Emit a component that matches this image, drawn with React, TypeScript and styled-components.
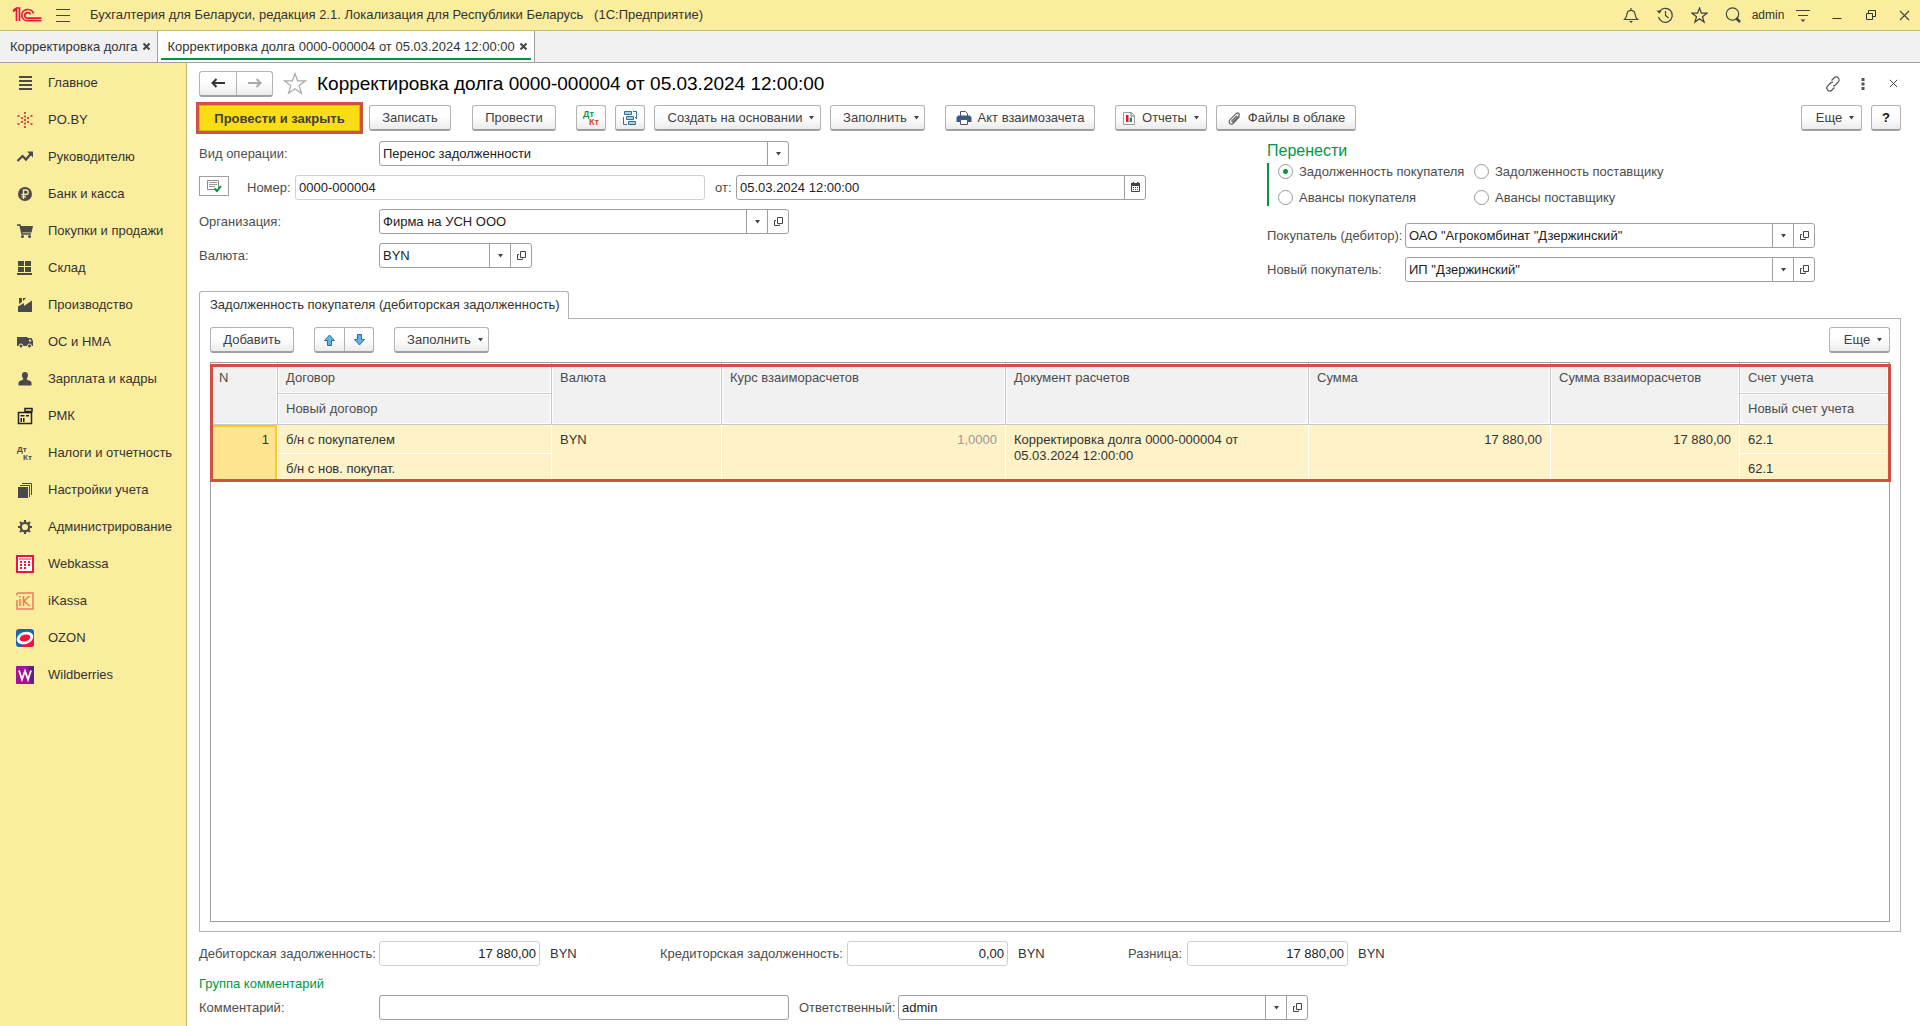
import React from "react";
import styled, { createGlobalStyle, css } from "styled-components";

const GREEN = "#009646";
const LINE = "#a0a0a0";
const YELLOW = "#fbed9e";
const RED = "#d35042";
const DARK = "#4a4a4a";

const Global = createGlobalStyle`
  * { box-sizing: border-box; }
  html, body { margin: 0; background: #fff; }
  body, button, input, select, table {
    font-family: "Liberation Sans", Arial, sans-serif;
    font-size: 13px;
    line-height: 16px;
    color: #333;
  }
  svg { display: block; flex: none; }
`;

/* ---------- frame ---------- */

const Page = styled.div`
  min-height: 100vh;
  display: flex;
  flex-direction: column;
`;

const TitleBar = styled.header`
  height: 31px;
  display: flex;
  align-items: center;
  justify-content: space-between;
  background: ${YELLOW};
  border-bottom: 1px solid #c9ba72;
  padding-left: 12px;
`;

const TitleGroup = styled.div`
  display: flex;
  align-items: center;
`;

const IconButton = styled.button<{ $w?: number }>`
  width: ${(p) => p.$w ?? 34}px;
  height: 24px;
  padding: 0;
  border: 0;
  background: none;
  display: flex;
  align-items: center;
  justify-content: center;
`;

const AppName = styled.span`
  margin-left: 6px;
  white-space: pre;
`;

const UserLink = styled.a`
  width: 36px;
  text-align: center;
  font-size: 12px;
  color: #333;
  text-decoration: none;
`;

const TabBar = styled.nav`
  height: 32px;
  display: flex;
  background: #f1f1f1;
  border-bottom: 1px solid ${LINE};
`;

const WindowTab = styled.div<{ $active?: boolean }>`
  display: flex;
  align-items: center;
  position: relative;
  padding: 0 1px 0 10px;
  border-right: 1px solid ${LINE};
  background: ${(p) => (p.$active ? "#fff" : "transparent")};
  ${(p) =>
    p.$active &&
    css`
      &::after {
        content: "";
        position: absolute;
        left: 3px;
        right: 3px;
        bottom: 2px;
        height: 2px;
        background: ${GREEN};
      }
    `}
`;

const TabLink = styled.a`
  color: #333;
  text-decoration: none;
  white-space: nowrap;
`;

const Body = styled.div`
  flex: 1;
  display: flex;
`;

const Sidebar = styled.nav`
  flex: none;
  width: 187px;
  background: ${YELLOW};
  border-right: 1px solid #c9ba72;
  padding-top: 1px;
`;

const SideLink = styled.a`
  height: 37px;
  display: flex;
  align-items: center;
  gap: 14px;
  padding-left: 16px;
  color: #333;
  text-decoration: none;
  white-space: nowrap;
`;

const Main = styled.main`
  flex: 1;
  min-width: 0;
  display: flex;
  flex-direction: column;
  padding: 8px 19px 6px 12px;
`;

/* ---------- buttons ---------- */

const buttonFace = css`
  border: 1px solid #b3b3b3;
  border-bottom: 2px solid ${LINE};
  border-radius: 3px;
  background: linear-gradient(#fff 45%, #ececec);
`;

const Button = styled.button<{ $w: number; $primary?: boolean }>`
  flex: none;
  width: ${(p) => p.$w}px;
  height: 26px;
  padding: 1px 0 0;
  display: flex;
  align-items: center;
  justify-content: center;
  gap: 6px;
  white-space: nowrap;
  color: #404040;
  ${buttonFace}
  ${(p) =>
    p.$primary &&
    css`
      border: 1px solid #d9b900;
      border-radius: 0;
      background: #fbdd13;
      font-weight: bold;
      outline: 3px solid ${RED};
      outline-offset: 0;
    `}
`;

const HelpButton = styled(Button)`
  font-weight: bold;
  color: #111;
`;

const ButtonPair = styled.div`
  display: flex;
  height: 26px;
  ${buttonFace}
  button + button {
    border-left: 1px solid #b3b3b3;
  }
`;

const HalfButton = styled.button<{ $w: number }>`
  width: ${(p) => p.$w}px;
  padding: 0;
  border: 0;
  background: none;
  display: flex;
  align-items: center;
  justify-content: center;
`;

const MenuText = styled.span`
  padding-left: 8px;
`;

const Row = styled.div<{ $gap?: number }>`
  display: flex;
  align-items: center;
  gap: ${(p) => p.$gap ?? 0}px;
`;

const HeadRow = styled(Row)`
  height: 25px;
`;

const Heading = styled.h1`
  margin: 0;
  font-size: 19px;
  line-height: 24px;
  font-weight: normal;
  color: #000;
  flex: 1;
`;

const CommandBar = styled.div`
  display: flex;
  margin-top: 9px;
  gap: 9px;
`;

const CommandGroup = styled.div<{ $after?: number }>`
  display: flex;
  gap: 9px;
  margin-right: ${(p) => p.$after ?? 11}px;
`;

const Spacer = styled.div`
  flex: 1;
`;

/* ---------- form ---------- */

const FormGrid = styled.div`
  display: grid;
  grid-template-columns: minmax(0, 1fr) 634px;
  margin-top: 10px;
`;

const Stack = styled.div`
  display: flex;
  flex-direction: column;
  gap: 9px;
`;

const Label = styled.label<{ $w: number }>`
  flex: none;
  width: ${(p) => p.$w}px;
  color: #4d4d4d;
  white-space: nowrap;
`;

const NextLabel = styled(Label)`
  padding-left: 10px;
`;

const FieldBox = styled.div<{ $w: number; $quiet?: boolean }>`
  flex: 0 1 ${(p) => p.$w}px;
  min-width: 0;
  height: 25px;
  display: flex;
  position: relative;
  border: 1px solid ${(p) => (p.$quiet ? "#d0d0d0" : LINE)};
  border-radius: 3px;
  background: #fff;
`;

const inputFace = css`
  flex: 1;
  min-width: 0;
  width: 100%;
  padding: 0 3px;
  border: 0;
  outline: 0;
  background: none;
  color: #222;
`;

const Input = styled.input<{ $right?: boolean }>`
  ${inputFace}
  text-align: ${(p) => (p.$right ? "right" : "left")};
`;

const Select = styled.select`
  ${inputFace}
  appearance: none;
`;

const SelectArrow = styled.span`
  position: absolute;
  top: 0;
  right: 0;
  bottom: 0;
  width: 21px;
  border-left: 1px solid ${LINE};
  display: flex;
  align-items: center;
  justify-content: center;
  pointer-events: none;
`;

const FieldButton = styled.button`
  flex: none;
  width: 21px;
  padding: 0;
  border: 0;
  border-left: 1px solid ${LINE};
  background: none;
  display: flex;
  align-items: center;
  justify-content: center;
`;

const StatusButton = styled.button`
  width: 30px;
  height: 20px;
  margin: 0 18px 4px 0;
  padding: 0;
  border: 1px solid ${LINE};
  background: #fff;
  display: flex;
  align-items: center;
  justify-content: center;
`;

const RadioGroup = styled.fieldset`
  margin: 0 0 8px;
  padding: 0;
  border: 0;
  min-width: 0;
`;

const RadioTitle = styled.legend`
  padding: 0;
  font-size: 16px;
  line-height: 20px;
  height: 22px;
  color: ${GREEN};
`;

const RadioGrid = styled.div`
  display: grid;
  grid-template-columns: 196px 196px;
  grid-auto-rows: 17px;
  row-gap: 9px;
  padding-left: 9px;
  border-left: 2px solid ${GREEN};
`;

const RadioLabel = styled.label`
  display: flex;
  align-items: center;
  gap: 6px;
  color: #4d4d4d;
  white-space: nowrap;
`;

const Radio = styled.input`
  appearance: none;
  flex: none;
  width: 15px;
  height: 15px;
  margin: 0;
  border: 1px solid #999;
  border-radius: 50%;
  &:checked {
    background: radial-gradient(circle, ${GREEN} 0 2px, #fff 3px);
  }
`;

/* ---------- tab panel ---------- */

const PageTab = styled.div`
  align-self: flex-start;
  height: 28px;
  margin: 9px 0 -1px;
  padding: 5px 8px 0 10px;
  border: 1px solid #b3b3b3;
  border-bottom: 0;
  border-radius: 3px 3px 0 0;
  background: #fff;
  position: relative;
  white-space: nowrap;
`;

const Panel = styled.section`
  flex: 1;
  display: flex;
  flex-direction: column;
  gap: 9px;
  padding: 8px 10px 9px;
  border: 1px solid #b3b3b3;
`;

const TableArea = styled.div`
  flex: 1;
  border: 1px solid ${LINE};
`;

const Marked = styled.div`
  position: relative;
  &::after {
    content: "";
    position: absolute;
    inset: 1px -2px -1px -1px;
    border: 3px solid ${RED};
    pointer-events: none;
  }
`;

const Table = styled.table`
  width: 100%;
  table-layout: fixed;
  border-collapse: separate;
  border-spacing: 0;
`;

const Th = styled.th`
  height: 31px;
  padding: 7px 7px 0 8px;
  background: #f1f1f1;
  border-right: 1px solid #c8c8c8;
  border-bottom: 1px solid #c8c8c8;
  box-shadow: inset -1px -1px 0 #fff, inset 1px 1px 0 #fff;
  font-weight: normal;
  text-align: left;
  vertical-align: top;
  color: #4d4d4d;
  white-space: nowrap;
`;

const Td = styled.td<{ $right?: boolean; $muted?: boolean; $focus?: boolean; $low?: boolean }>`
  height: ${(p) => (p.$low ? 27 : 29)}px;
  padding: 7px 8px 0;
  background: ${(p) => (p.$focus ? "#ffe58f" : "#fef2c8")};
  border-right: 1px solid #fff;
  border-bottom: 1px solid #fff;
  text-align: ${(p) => (p.$right ? "right" : "left")};
  vertical-align: top;
  color: ${(p) => (p.$muted ? "#999" : "#333")};
  ${(p) =>
    p.$focus &&
    css`
      box-shadow: inset -2px 2px 0 #fcca26;
    `}
`;

/* ---------- footer ---------- */

const Footer = styled.footer`
  margin-top: 9px;
`;

const Unit = styled.span`
  width: 120px;
  padding-left: 10px;
`;

const GroupTitle = styled.div`
  margin: 10px 0 3px;
  color: ${GREEN};
`;

/* ---------- icons ---------- */

const Svg = ({ w, h = w, children }: { w: number; h?: number; children: React.ReactNode }) => (
  <svg width={w} height={h} viewBox={`0 0 ${w} ${h}`} fill="none" aria-hidden="true">
    {children}
  </svg>
);

const Caret = () => (
  <Svg w={7} h={4}>
    <path d="M1 0h5L3.5 3.5z" fill="#444" />
  </Svg>
);

const OpenIcon = () => (
  <Svg w={11} h={11}>
    <path d="M4.5 1.5h5v6h-5zM3 4.5H1.5v5h5V8.5" stroke="#444" />
  </Svg>
);

const CrossIcon = () => (
  <Svg w={9}>
    <path d="M1.5 1.5l6 6M7.5 1.5l-6 6" stroke="#444" strokeWidth="2" />
  </Svg>
);

const Logo = () => (
  <Svg w={30} h={18}>
    <g stroke="#e3193c" strokeWidth="1.7">
      <path d="M1 5.5L4.5 3V15M7.5 15V2H4.5L1.5 4.2" />
      <path d="M21.5 7.5a6 5.6 0 1 0-5.5 7.2H29.5" />
      <path d="M18.5 8.5a3 2.7 0 1 0-2.5 3.6H29.5" />
    </g>
  </Svg>
);

const MenuIcon = () => (
  <Svg w={16}>
    <path d="M1 2.5h14M1 8.5h14M1 14.5h14" stroke="#444" />
  </Svg>
);

const BellIcon = () => (
  <Svg w={16}>
    <path
      d="M1.5 12.5h13c-2-1.8-2-3-2.6-6C11.4 4.2 10 3.3 8 3.3S4.6 4.2 4.1 6.5c-.6 3-.6 4.2-2.6 6zM8 1v2"
      stroke="#444"
      strokeWidth="1.2"
    />
    <path d="M6 14h4l-2 2z" fill="#444" />
  </Svg>
);

const HistoryIcon = () => (
  <Svg w={18}>
    <path d="M3.4 5.5A7 7 0 1 1 2.5 11M9.5 5v4.5l3 2.5" stroke="#444" strokeWidth="1.2" />
    <path d="M.5 4.5l5 .2-2 3z" fill="#444" />
  </Svg>
);

const StarIcon = ({ size, color }: { size: number; color: string }) => (
  <svg
    width={size}
    height={size}
    viewBox="0 0 24 24"
    fill="none"
    stroke={color}
    strokeWidth={size > 20 ? 1.2 : 1.8}
    aria-hidden="true"
  >
    <path d="M12 1.5l2.6 7.3h7.9l-6.3 4.8 2.3 7.7-6.5-4.6-6.5 4.6 2.3-7.7L1.5 8.8h7.9z" />
  </svg>
);

const SearchIcon = () => (
  <Svg w={16}>
    <circle cx="7.5" cy="7" r="6.2" stroke="#444" strokeWidth="1.2" />
    <path d="M11 11l4 4" stroke="#444" strokeWidth="2.5" />
  </Svg>
);

const OptionsIcon = () => (
  <Svg w={16}>
    <path d="M1 3.5h14M3 8.5h10" stroke="#444" strokeWidth="1.2" />
    <path d="M5.5 12.5h5L8 15z" fill="#444" />
  </Svg>
);

const MinimizeIcon = () => (
  <Svg w={10}>
    <path d="M.5 8.5h9" stroke="#333" />
  </Svg>
);

const RestoreIcon = () => (
  <Svg w={10}>
    <path d="M.5 3.5h6v6h-6zM2.5 3V.5h7v6H7" stroke="#333" />
  </Svg>
);

const CloseIcon = ({ size = 11 }: { size?: number }) => (
  <svg width={size} height={size} viewBox="0 0 11 11" fill="none" aria-hidden="true">
    <path d="M1 1l9 9M10 1l-9 9" stroke="#444" strokeWidth="1.2" />
  </svg>
);

const LinkIcon = () => (
  <Svg w={16}>
    <g stroke="#555" strokeWidth="1.2">
      <path d="M6.5 4.5L9 2c1.3-1.3 3-1.3 4.2-.2 1.2 1.2 1.3 3 0 4.3L10.5 9c-.8.7-1.6 1-2.5.8" />
      <path d="M9.5 11.5L7 14c-1.3 1.3-3 1.3-4.2.2-1.2-1.2-1.3-3 0-4.3L5.5 7c.8-.7 1.6-1 2.5-.8" />
    </g>
  </Svg>
);

const DotsIcon = () => (
  <Svg w={4} h={12}>
    <path d="M.5 0h3v3h-3zM.5 4.5h3v3h-3zM.5 9h3v3h-3z" fill="#555" />
  </Svg>
);

const ArrowIcon = ({ color, flip }: { color: string; flip?: boolean }) => (
  <Svg w={14} h={10}>
    <path d={flip ? "M0 5h12M8.5 1l4 4-4 4" : "M14 5H2M5.5 1l-4 4 4 4"} stroke={color} strokeWidth="2" />
  </Svg>
);

const MoveIcon = ({ down }: { down?: boolean }) => (
  <Svg w={11} h={12}>
    <path
      d={down ? "M3.5.5h4v5h3l-5 5.5-5-5.5h3z" : "M3.5 11.5h4v-5h3L5.5 1l-5 5.5h3z"}
      fill="#5cb3e6"
      stroke="#2c6f9e"
    />
  </Svg>
);

const PostingsIcon = ({ a, b, size = 8 }: { a: string; b: string; size?: number }) => (
  <svg
    width="18"
    height="18"
    viewBox="0 0 18 18"
    fontFamily="Liberation Sans, Arial, sans-serif"
    fontWeight="bold"
    fontSize={size}
    aria-hidden="true"
  >
    <text x="1" y="8" fill={a}>Дт</text>
    <text x="7" y="16" fill={b}>Кт</text>
  </svg>
);

const StructureIcon = () => (
  <Svg w={16}>
    <g stroke="#356f96">
      <path d="M2.5 1.5h7v3h-7zM4.5 6.5h7v3h-7zM6.5 11.5h7v3h-7z" fill="#a9cde4" />
      <path d="M11 1.5h3.5V9M1.5 7v7.5H5M13 7.5h1.5" />
    </g>
  </Svg>
);

const PrintIcon = () => (
  <Svg w={16}>
    <path d="M4.5 6V1.5h5l2 2V6" fill="#fff" stroke="#557" />
    <path d="M2 5.5h12l1.5 2V12H.5V7.5z" fill="#3b5a8c" />
    <path d="M4.5 9.5h7v5h-7z" fill="#fff" stroke="#557" />
  </Svg>
);

const ReportIcon = () => (
  <Svg w={14} h={15}>
    <path d="M1.5 1.5h8l3 3v9h-11z" fill="#fff" stroke="#999" />
    <path d="M9 1.5V5h3.5" stroke="#666" />
    <path d="M4 4h2.5v7H4z" fill="#e3173e" />
    <path d="M7.5 6.5H10V11H7.5z" fill="#129a4b" />
  </Svg>
);

const ClipIcon = () => (
  <Svg w={15} h={15}>
    <path
      d="M12.5 5.5l-6 6.5c-1.2 1.2-2.8 1.3-3.7.4-1-1-.8-2.5.3-3.7l6-6c.8-.8 2-.9 2.7-.2.7.7.7 1.8-.1 2.6L6.3 10.6c-.4.4-.9.4-1.2.1-.3-.3-.3-.8.1-1.2L10 4.8"
      stroke="#666"
      strokeWidth="1.2"
    />
  </Svg>
);

const StatusIcon = () => (
  <Svg w={16} h={14}>
    <path d="M1.5 1.5h11v9h-11z" fill="#fff" stroke="#888" />
    <path d="M3 3.5h8M3 5.5h8M3 7.5h6" stroke="#999" />
    <path d="M8.5 9.5L11 12l4-5" stroke={GREEN} strokeWidth="2" />
  </Svg>
);

const CalendarIcon = () => (
  <Svg w={11}>
    <path d="M1.5 1.5h8v8h-8z" stroke="#444" />
    <path d="M1 1h9v3H1zM2.5 0H4v1H2.5zM7 0h1.5v1H7z" fill="#444" />
    <path d="M3 5.5h6M3 7.5h6" stroke="#444" strokeDasharray="1 1" />
  </Svg>
);

const side: Record<string, React.ReactNode> = {
  main: <path d="M3 3h13M3 7h13M3 11h13M3 15h13" stroke={DARK} strokeWidth="2" />,
  poby: (
    <path
      d="M8 1h2v2H8zM8 4.5h2v2H8zM8 8h2v2H8zM8 11.5h2v2H8zM8 15h2v2H8zM5 6h2v2H5zM11 6h2v2h-2zM5 10h2v2H5zM11 10h2v2h-2zM1.5 4h2v2h-2zM14.5 4h2v2h-2zM1.5 12h2v2h-2zM14.5 12h2v2h-2z"
      fill="#d2503a"
    />
  ),
  chief: (
    <>
      <path d="M1.5 13l5-5 3.5 3.5 5-6" stroke={DARK} strokeWidth="2.2" />
      <path d="M11 3.5h6v6z" fill={DARK} />
    </>
  ),
  bank: (
    <>
      <circle cx="9" cy="9" r="7" fill={DARK} />
      <path d="M7.5 14V5H10c3 0 3 4.5 0 4.5H5.5M5.5 11.8H10" stroke={YELLOW} strokeWidth="1.3" />
    </>
  ),
  cart: (
    <>
      <path d="M1 3h3l2 9h9" stroke={DARK} strokeWidth="1.4" />
      <path d="M4 4h13l-1.5 6.5h-10z" fill={DARK} />
      <circle cx="6.5" cy="14.5" r="1.5" fill={DARK} />
      <circle cx="13.5" cy="14.5" r="1.5" fill={DARK} />
    </>
  ),
  store: <path d="M2 2h6v5H2zM9 2h6v5H9zM2 8h6v5H2zM9 8h6v5H9zM1 14h15v2H1z" fill={DARK} />,
  plant: <path d="M2 16v-5.5L8 7v3l8-5.5V16zM3 2h3v4L3 8zM7 2h3L7 5z" fill={DARK} />,
  truck: (
    <>
      <path d="M1 4h10.500v9H1zM11 5h4.5L17 8v5h-6z" fill={DARK} />
      <path d="M13 6.500h1.500l1 2H13z" fill={YELLOW} />
      <circle cx="5" cy="13" r="2" fill={DARK} stroke={YELLOW} />
      <circle cx="13.5" cy="13" r="2" fill={DARK} stroke={YELLOW} />
    </>
  ),
  person: (
    <path d="M9 2c4 0 3.5 5 1.500 7 0 1 4.500 1.500 5 3.500v3h-13v-3c.5-2 5-2.500 5-3.500C5.500 7 5 2 9 2z" fill={DARK} />
  ),
  till: (
    <>
      <path d="M2.5 5.5h13v11h-13zM9 1.5h7v3H9zM12 4.500v2" stroke="#222" strokeWidth="1.5" />
      <path d="M4.5 8h4v1.5h-4zM4.5 11H6v4H4.5zM7 11h1.5v4H7zM10 8h3v1.5h-3z" fill="#222" />
    </>
  ),
  books: (
    <>
      <path d="M2 6h10v11H2z" fill={DARK} />
      <path d="M4 4.5h9.5V16M6 2.5h9.5V14" stroke={DARK} />
    </>
  ),
  gear: (
    <>
      <circle cx="9" cy="9" r="4.2" stroke={DARK} strokeWidth="2.2" />
      <path
        d="M9 2v2.5M9 13.5V16M2 9h2.5M13.5 9H16M4 4l2 2M12 12l2 2M14 4l-2 2M6 12l-2 2"
        stroke={DARK}
        strokeWidth="2.2"
      />
    </>
  ),
  webkassa: (
    <>
      <path d="M1 1h16v16H1z" fill="#fff" stroke="#f5113f" strokeWidth="2" />
      <path d="M3 4h12" stroke="#f5113f" />
      <path
        d="M4 6h2v2H4zM8 6h2v2H8zM12 6h2v2h-2zM4 9h2v2H4zM8 9h2v2H8zM12 9h2v2h-2zM4 12h2v2H4zM8 12h2v2H8z"
        fill="#f5113f"
      />
    </>
  ),
  ikassa: (
    <path
      d="M4 1h13v16H1V8M1 1v2.5M1 1h4M4 7v7M4 4v1.5M7.5 4v10M13.5 4L8 9l5.5 5"
      stroke="#ec7a5e"
      strokeWidth="1.5"
    />
  ),
  ozon: (
    <>
      <rect width="18" height="18" rx="3" fill="#1666c0" />
      <path d="M18 9v6a3 3 0 0 1-3 3H4z" fill="#f5113f" />
      <ellipse cx="9" cy="9" rx="8.5" ry="6" transform="rotate(-20 9 9)" fill="#fff" />
      <ellipse cx="9" cy="9" rx="5.5" ry="3.3" transform="rotate(-15 9 9)" fill="#f5113f" />
    </>
  ),
  wb: (
    <>
      <rect width="18" height="18" rx="1" fill="#a3129b" />
      <path d="M12 0h6v18h-3z" fill="#5a2380" />
      <path d="M3 4.5l3 9L9 5l3 8.5 3-9" stroke="#fff" strokeWidth="1.8" />
    </>
  ),
};

const menu: [string, string][] = [
  ["main", "Главное"],
  ["poby", "PO.BY"],
  ["chief", "Руководителю"],
  ["bank", "Банк и касса"],
  ["cart", "Покупки и продажи"],
  ["store", "Склад"],
  ["plant", "Производство"],
  ["truck", "ОС и НМА"],
  ["person", "Зарплата и кадры"],
  ["till", "РМК"],
  ["dtkt", "Налоги и отчетность"],
  ["books", "Настройки учета"],
  ["gear", "Администрирование"],
  ["webkassa", "Webkassa"],
  ["ikassa", "iKassa"],
  ["ozon", "OZON"],
  ["wb", "Wildberries"],
];

/* ---------- composed parts ---------- */

const MenuButton = ({ w, icon, children }: { w: number; icon?: React.ReactNode; children: string }) => (
  <Button $w={w}>
    {icon}
    {icon ? children : <MenuText>{children}</MenuText>}
    <Caret />
  </Button>
);

const Combo = ({ id, value, w = 410 }: { id: string; value: string; w?: number }) => (
  <FieldBox $w={w}>
    <Input id={id} defaultValue={value} />
    <FieldButton type="button" aria-label="Выбрать"><Caret /></FieldButton>
    <FieldButton type="button" aria-label="Открыть"><OpenIcon /></FieldButton>
  </FieldBox>
);

const Total = ({ id, label, labelWidth, value }: { id: string; label: string; labelWidth: number; value: string }) => (
  <>
    <Label htmlFor={id} $w={labelWidth}>{label}</Label>
    <FieldBox $w={161} $quiet>
      <Input id={id} defaultValue={value} readOnly $right />
    </FieldBox>
    <Unit>BYN</Unit>
  </>
);

const RadioItem = ({ label, checked }: { label: string; checked?: boolean }) => (
  <RadioLabel>
    <Radio type="radio" name="transfer" defaultChecked={checked} />
    {label}
  </RadioLabel>
);

const columns = [67, 274, 170, 284, 303, 242, 189];

export default function App() {
  return (
    <>
      <Global />
      <Page>
        <TitleBar>
          <TitleGroup>
            <Logo />
            <IconButton aria-label="Меню" $w={42}><MenuIcon /></IconButton>
            <AppName>{"Бухгалтерия для Беларуси, редакция 2.1. Локализация для Республики Беларусь   (1С:Предприятие)"}</AppName>
          </TitleGroup>
          <TitleGroup>
            <IconButton aria-label="Уведомления"><BellIcon /></IconButton>
            <IconButton aria-label="История"><HistoryIcon /></IconButton>
            <IconButton aria-label="Избранное"><StarIcon size={17} color="#444" /></IconButton>
            <IconButton aria-label="Поиск"><SearchIcon /></IconButton>
            <UserLink href="#user">admin</UserLink>
            <IconButton aria-label="Настройки"><OptionsIcon /></IconButton>
            <IconButton aria-label="Свернуть"><MinimizeIcon /></IconButton>
            <IconButton aria-label="Восстановить"><RestoreIcon /></IconButton>
            <IconButton aria-label="Закрыть" $w={32}><CloseIcon /></IconButton>
          </TitleGroup>
        </TitleBar>

        <TabBar>
          <WindowTab>
            <TabLink href="#list">Корректировка долга</TabLink>
            <IconButton aria-label="Закрыть вкладку" $w={18}><CrossIcon /></IconButton>
          </WindowTab>
          <WindowTab $active>
            <TabLink href="#doc">Корректировка долга 0000-000004 от 05.03.2024 12:00:00</TabLink>
            <IconButton aria-label="Закрыть вкладку" $w={18}><CrossIcon /></IconButton>
          </WindowTab>
        </TabBar>

        <Body>
          <Sidebar>
            {menu.map(([icon, text]) => (
              <SideLink key={icon} href={`#${icon}`}>
                {icon === "dtkt" ? <PostingsIcon a={DARK} b={DARK} /> : <Svg w={18}>{side[icon]}</Svg>}
                {text}
              </SideLink>
            ))}
          </Sidebar>

          <Main>
            <HeadRow>
              <ButtonPair>
                <HalfButton aria-label="Назад" $w={36}><ArrowIcon color="#333" /></HalfButton>
                <HalfButton aria-label="Вперед" $w={36}><ArrowIcon color="#aaa" flip /></HalfButton>
              </ButtonPair>
              <IconButton aria-label="В избранное" $w={44}><StarIcon size={24} color="#aaa" /></IconButton>
              <Heading>Корректировка долга 0000-000004 от 05.03.2024 12:00:00</Heading>
              <Row $gap={14}>
                <IconButton aria-label="Ссылка" $w={16}><LinkIcon /></IconButton>
                <IconButton aria-label="Дополнительно" $w={16}><DotsIcon /></IconButton>
                <IconButton aria-label="Закрыть" $w={16}><CloseIcon size={9} /></IconButton>
              </Row>
            </HeadRow>

            <CommandBar>
              <CommandGroup $after={12}>
                <Button $w={161} $primary>Провести и закрыть</Button>
                <Button $w={82}>Записать</Button>
              </CommandGroup>
              <CommandGroup>
                <Button $w={84}>Провести</Button>
              </CommandGroup>
              <CommandGroup>
                <Button $w={30} aria-label="Проводки"><PostingsIcon a="#0a9246" b="#d8402e" size={9} /></Button>
                <Button $w={30} aria-label="Структура"><StructureIcon /></Button>
                <MenuButton w={167}>Создать на основании</MenuButton>
                <MenuButton w={95}>Заполнить</MenuButton>
              </CommandGroup>
              <CommandGroup>
                <Button $w={150}><PrintIcon />Акт взаимозачета</Button>
              </CommandGroup>
              <CommandGroup>
                <MenuButton w={92} icon={<ReportIcon />}>Отчеты</MenuButton>
                <Button $w={140}><ClipIcon />Файлы в облаке</Button>
              </CommandGroup>
              <Spacer />
              <MenuButton w={61}>Еще</MenuButton>
              <HelpButton $w={30}>?</HelpButton>
            </CommandBar>

            <FormGrid>
              <Stack>
                <Row>
                  <Label htmlFor="kind" $w={180}>Вид операции:</Label>
                  <FieldBox $w={410}>
                    <Select id="kind"><option>Перенос задолженности</option></Select>
                    <SelectArrow><Caret /></SelectArrow>
                  </FieldBox>
                </Row>
                <Row>
                  <StatusButton aria-label="Статус документа"><StatusIcon /></StatusButton>
                  <Label htmlFor="number" $w={48}>Номер:</Label>
                  <FieldBox $w={410} $quiet><Input id="number" defaultValue="0000-000004" /></FieldBox>
                  <NextLabel htmlFor="date" $w={31}>от:</NextLabel>
                  <FieldBox $w={410}>
                    <Input id="date" defaultValue="05.03.2024 12:00:00" />
                    <FieldButton type="button" aria-label="Календарь"><CalendarIcon /></FieldButton>
                  </FieldBox>
                </Row>
                <Row>
                  <Label htmlFor="org" $w={180}>Организация:</Label>
                  <Combo id="org" value="Фирма на УСН ООО" />
                </Row>
                <Row>
                  <Label htmlFor="currency" $w={180}>Валюта:</Label>
                  <Combo id="currency" value="BYN" w={153} />
                </Row>
              </Stack>
              <Stack>
                <RadioGroup>
                  <RadioTitle>Перенести</RadioTitle>
                  <RadioGrid>
                    <RadioItem label="Задолженность покупателя" checked />
                    <RadioItem label="Задолженность поставщику" />
                    <RadioItem label="Авансы покупателя" />
                    <RadioItem label="Авансы поставщику" />
                  </RadioGrid>
                </RadioGroup>
                <Row>
                  <Label htmlFor="buyer" $w={138}>Покупатель (дебитор):</Label>
                  <Combo id="buyer" value={'ОАО "Агрокомбинат "Дзержинский"'} />
                </Row>
                <Row>
                  <Label htmlFor="newbuyer" $w={138}>Новый покупатель:</Label>
                  <Combo id="newbuyer" value={'ИП "Дзержинский"'} />
                </Row>
              </Stack>
            </FormGrid>

            <PageTab>Задолженность покупателя (дебиторская задолженность)</PageTab>
            <Panel>
              <Row $gap={20}>
                <Button $w={84}>Добавить</Button>
                <ButtonPair>
                  <HalfButton aria-label="Вверх" $w={29}><MoveIcon /></HalfButton>
                  <HalfButton aria-label="Вниз" $w={29}><MoveIcon down /></HalfButton>
                </ButtonPair>
                <MenuButton w={95}>Заполнить</MenuButton>
                <Spacer />
                <MenuButton w={61}>Еще</MenuButton>
              </Row>
              <TableArea>
                <Marked>
                  <Table>
                    <colgroup>
                      {columns.map((w, i) => <col key={i} width={w} />)}
                      <col />
                    </colgroup>
                    <thead>
                      <tr>
                        <Th rowSpan={2}>N</Th>
                        <Th>Договор</Th>
                        <Th rowSpan={2}>Валюта</Th>
                        <Th rowSpan={2}>Курс взаиморасчетов</Th>
                        <Th rowSpan={2}>Документ расчетов</Th>
                        <Th rowSpan={2}>Сумма</Th>
                        <Th rowSpan={2}>Сумма взаиморасчетов</Th>
                        <Th>Счет учета</Th>
                      </tr>
                      <tr>
                        <Th>Новый договор</Th>
                        <Th>Новый счет учета</Th>
                      </tr>
                    </thead>
                    <tbody>
                      <tr>
                        <Td rowSpan={2} $right $focus>1</Td>
                        <Td>б/н с покупателем</Td>
                        <Td rowSpan={2}>BYN</Td>
                        <Td rowSpan={2} $right $muted>1,0000</Td>
                        <Td rowSpan={2}>Корректировка долга 0000-000004 от 05.03.2024 12:00:00</Td>
                        <Td rowSpan={2} $right>17 880,00</Td>
                        <Td rowSpan={2} $right>17 880,00</Td>
                        <Td>62.1</Td>
                      </tr>
                      <tr>
                        <Td $low>б/н с нов. покупат.</Td>
                        <Td $low>62.1</Td>
                      </tr>
                    </tbody>
                  </Table>
                </Marked>
              </TableArea>
            </Panel>

            <Footer>
              <Row>
                <Total id="debit" label="Дебиторская задолженность:" labelWidth={180} value="17 880,00" />
                <Total id="credit" label="Кредиторская задолженность:" labelWidth={187} value="0,00" />
                <Total id="diff" label="Разница:" labelWidth={59} value="17 880,00" />
              </Row>
              <GroupTitle>Группа комментарий</GroupTitle>
              <Row>
                <Label htmlFor="comment" $w={180}>Комментарий:</Label>
                <FieldBox $w={410}><Input id="comment" /></FieldBox>
                <NextLabel htmlFor="owner" $w={109}>Ответственный:</NextLabel>
                <Combo id="owner" value="admin" />
              </Row>
            </Footer>
          </Main>
        </Body>
      </Page>
    </>
  );
}
